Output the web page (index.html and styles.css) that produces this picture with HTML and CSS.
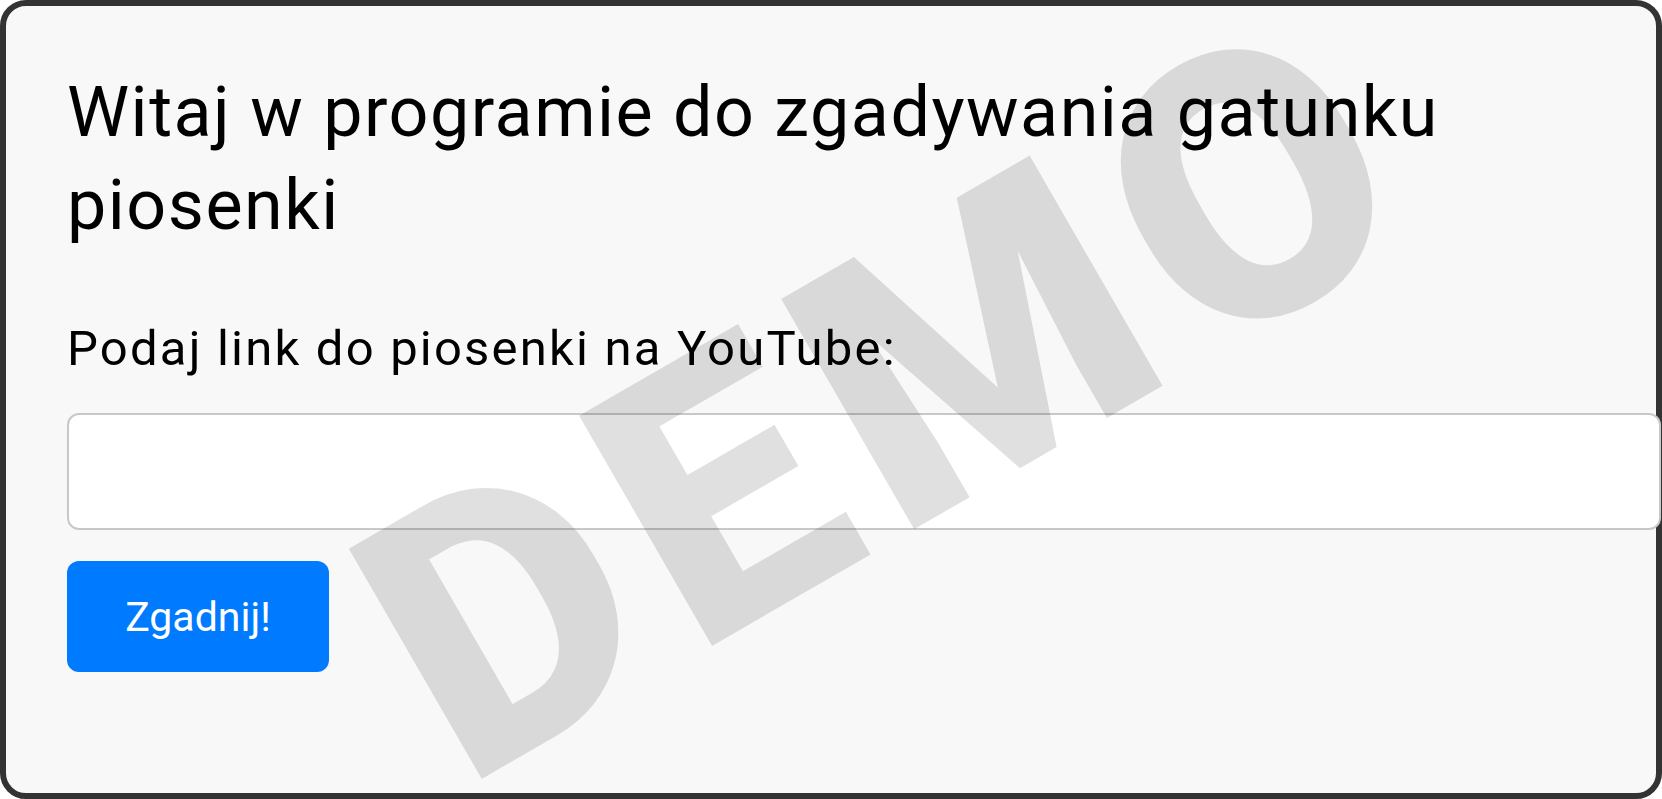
FILE: index.html
```html
<!DOCTYPE html>
<html lang="pl">
<head>
<meta charset="utf-8">
<title>Zgadywanie gatunku piosenki</title>
<link rel="stylesheet" href="styles.css">
</head>
<body>
<main class="frame">
  <h1 class="title">Witaj w programie do zgadywania gatunku piosenki</h1>
  <form class="form">
    <label class="label" for="link">Podaj link do piosenki na YouTube:</label>
    <input class="input" id="link" type="text">
    <button class="button" type="button">Zgadnij!</button>
  </form>
  <div class="overlay" aria-hidden="true">
    <div class="watermark">DEMO</div>
  </div>
</main>
</body>
</html>
```

FILE: styles.css
```css
html, body {
  margin: 0;
  padding: 0;
  background: #ffffff;
}

body {
  width: 1662px;
  height: 799px;
  overflow: hidden;
  font-family: Roboto, "Liberation Sans", sans-serif;
  color: #000;
}

.frame {
  position: relative;
  box-sizing: border-box;
  width: 1662px;
  height: 799px;
  border: 6px solid #333333;
  border-radius: 26px;
  background: #f8f8f8;
  padding: 60px 0 0 61px;
}

.title {
  margin: 0;
  font-size: 70px;
  line-height: 93px;
  font-weight: 400;
  letter-spacing: 1.5px;
  width: 1500px;
}

.form {
  display: flex;
  flex-direction: column;
  align-items: flex-start;
  margin-top: 67px;
}

.label {
  font-size: 49px;
  line-height: 59px;
  font-weight: 400;
  letter-spacing: 2.2px;
}

.input {
  box-sizing: border-box;
  margin-top: 35px;
  width: 1594px;
  height: 117px;
  border: 2px solid #c8c8c8;
  border-radius: 12px;
  background: #ffffff;
  font-family: inherit;
  font-size: 40px;
  padding: 0 20px;
  outline: none;
}

.button {
  margin-top: 31px;
  width: 262px;
  height: 111px;
  border: none;
  border-radius: 12px;
  background: #007bff;
  color: #ffffff;
  font-family: inherit;
  font-size: 41px;
  font-weight: 400;
  padding: 0;
}

.overlay {
  position: absolute;
  inset: 0;
  overflow: hidden;
  border-radius: 20px;
  pointer-events: none;
}

.watermark {
  position: absolute;
  left: 885px;
  top: 389px;
  transform: translate(-50%, -50%) rotate(-30deg);
  font-family: Roboto, "Liberation Sans", sans-serif;
  font-weight: 900;
  font-size: 374px;
  line-height: 0.68;
  letter-spacing: 24px;
  color: rgba(0, 0, 0, 0.12);
  white-space: nowrap;
}
```
